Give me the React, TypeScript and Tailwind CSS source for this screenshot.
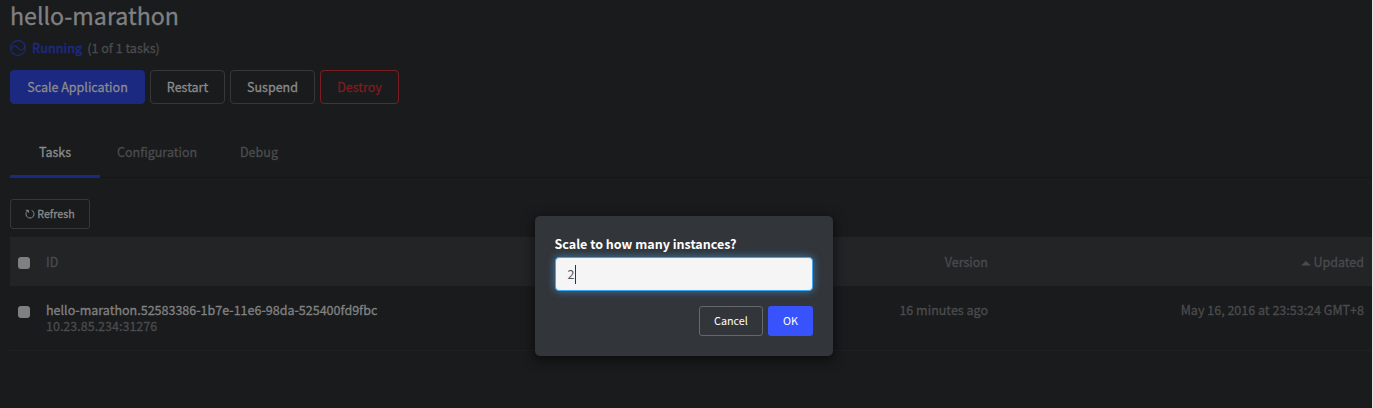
import React from "react";

const btn = "flex h-[34px] items-center justify-center rounded-[4px] border text-[12.5px]";

function Check() {
  return <span className="block size-3 rounded-[3px] bg-[#808080]" />;
}

export default function App() {
  return (
    <div className="relative h-[408px] w-[1373px] overflow-hidden border-r border-[#e4e4e4] bg-[#1a1b1c] font-['Noto_Sans_CJK_SC',sans-serif] text-[12.53px] leading-4 font-normal text-[#4a4b4e]">
      <main className="flex flex-col pl-[10px] [-webkit-text-stroke-width:0.3px]">
        <h1 className="h-8 text-[23.2px] leading-[31px] font-normal text-[#808182]">hello-marathon</h1>
        <div className="mt-2 flex h-4 items-center">
          <svg viewBox="0 0 16 16" className="size-4" fill="none" stroke="#1c2a80" strokeWidth="1.1">
            <circle cx="8" cy="8" r="7.4" />
            <path d="M1 9.500C3 5 5.600 5 8 8S13 11 15 6.500" />
          </svg>
          <span className="ml-[6px] font-medium text-[#1c2a80]">Running</span>
          <span className="ml-[5px]">(1 of 1 tasks)</span>
        </div>
        <div className="mt-[14px] flex gap-[5px] text-[#8a8b8c]">
          <button className={`${btn} w-[135px] border-[#1b2980] bg-[#1b2980]`}>Scale Application</button>
          <button className={`${btn} w-[75px] border-[#363739]`}>Restart</button>
          <button className={`${btn} w-[85px] border-[#363739]`}>Suspend</button>
          <button className={`${btn} w-[79px] border-[#7d1d21] text-[#7d1d21]`}>Destroy</button>
        </div>
        <nav className="mt-[23px] flex h-[51px] border-b border-[#141516] pt-[17px]">
          <div className="h-[34px] w-[90px] border-b-[3px] border-[#1b2980] text-center text-[#8a8b8c]">Tasks</div>
          <div className="ml-[17px] w-[80px]">Configuration</div>
          <div className="ml-[43px]">Debug</div>
        </nav>
        <button className="mt-[21px] flex h-[30px] w-20 items-center justify-center gap-[2px] rounded-[3px] border border-[#363739] pb-px text-[10.7px] text-[#8a8b8c]">
          <svg viewBox="0 0 10 10" className="size-[10px]" fill="none" stroke="currentColor" strokeWidth="1">
            <path d="M.8 1.300H3.400V3.800M3.200 1.600C1.300 2.400.7 4.200 1.100 5.900C1.600 7.900 3.100 9 5 9C7 9 8.500 7.800 8.900 5.900C9.300 3.900 8.400 2.200 6.600 1.300" />
          </svg>
          Refresh
        </button>
        <div className="mt-2 flex h-[49px] items-center bg-[#232426]">
          <div className="w-9 pt-[3px] pl-2"><Check /></div>
          <div className="w-[400px] pt-px">ID</div>
          <div className="w-[542px] pt-px text-right">Version</div>
          <div className="flex w-[376px] items-center justify-end pt-px">
            <svg viewBox="0 0 10 5" className="mt-[3px] mr-[2px] h-[5px] w-[10px]" fill="currentColor" strokeWidth="0"><path d="M0 4.500L5 0L10 4.500Z" /></svg>
            Updated
          </div>
        </div>
        <div className="flex h-[65px] border-b border-[#1f2022] pt-4">
          <div className="w-9 pt-1 pl-2"><Check /></div>
          <div className="w-[400px] whitespace-nowrap">
            <div className="text-[#808182]">hello-marathon.52583386-1b7e-11e6-98da-525400fd9fbc</div>
            <div>10.23.85.234:31276</div>
          </div>
          <div className="w-[542px] text-right">16 minutes ago</div>
          <div className="w-[376px] text-right">May 16, 2016 at 23:53:24 GMT+8</div>
        </div>
      </main>
      <div className="absolute inset-0 flex items-start pt-[216px] pl-[535px]">
        <section className="h-[140px] w-[298px] rounded-[5px] bg-[#323539] px-5 pt-5 shadow-[0_3px_12px_2px_rgba(0,0,0,0.5)]">
          <div className="-ml-[0.5px] h-4 text-[12.5px] leading-4 font-bold text-white">Scale to how many instances?</div>
          <div className="mt-[5px] flex h-[34px] items-center rounded-[4px] border border-[#3fa4ed] bg-[#f5f5f5] pl-[11.5px] text-[12.5px] font-normal text-[#55585c] shadow-[0_0_8px_rgba(63,164,237,0.65)]">
            2<span className="ml-[0.5px] h-[19px] w-px bg-[#333]" />
          </div>
          <div className="mt-[15px] flex justify-end gap-[5px] text-[10.8px] font-normal text-white">
            <button className="h-[30px] w-16 rounded-[3px] border border-[#65686c] pb-[2px]">Cancel</button>
            <button className="h-[30px] w-[45px] rounded-[3px] bg-[#3853fc] pb-[2px]">OK</button>
          </div>
        </section>
      </div>
    </div>
  );
}
